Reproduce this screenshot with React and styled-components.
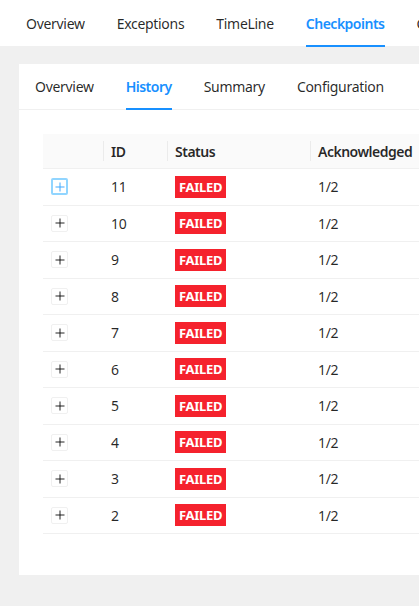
import React from "react"
import styled, { createGlobalStyle } from "styled-components"

const topTabs = ["Overview", "Exceptions", "TimeLine", "Checkpoints", "Configuration"]
const subTabs = ["Overview", "History", "Summary", "Configuration"]
const rows = [11, 10, 9, 8, 7, 6, 5, 4, 3, 2]

export default () => {
  return (
    <Page>
      <GlobalStyle />
      <TopBar>
        {topTabs.map((t) => (
          <TopTab key={t} $active={t === "Checkpoints"}>
            {t}
          </TopTab>
        ))}
      </TopBar>

      <Content>
        <Card>
          <SubBar>
            {subTabs.map((t) => (
              <SubTab key={t} $active={t === "History"}>
                {t}
              </SubTab>
            ))}
          </SubBar>

          <TableWrap>
            <HeadRow>
              <HeadCell />
              <HeadCell $divider>ID</HeadCell>
              <HeadCell $divider>Status</HeadCell>
              <HeadCell $divider>Acknowledged</HeadCell>
            </HeadRow>
            {rows.map((id, i) => (
              <Row key={id}>
                <Cell>
                  <Expand $focused={i === 0} />
                </Cell>
                <Cell>{id}</Cell>
                <Cell>
                  <Badge>FAILED</Badge>
                </Cell>
                <Cell>1/2</Cell>
              </Row>
            ))}
          </TableWrap>
        </Card>
      </Content>
    </Page>
  )
}

const GlobalStyle = createGlobalStyle`
  html, body {
    margin: 0;
    background: #f0f0f0;
    overflow: hidden;
  }
  body {
    font-family: "Segoe UI", "Noto Sans", "Open Sans", sans-serif;
    font-size: 14px;
    letter-spacing: -0.3px;
    color: rgba(0, 0, 0, 0.85);
  }
`

const Page = styled.div`
  width: 760px;
  min-height: 606px;
`

const TopBar = styled.div`
  display: flex;
  gap: 32px;
  height: 46px;
  padding-left: 26px;
  background: #fff;
`

const TopTab = styled.div`
  display: flex;
  align-items: center;
  box-sizing: border-box;
  height: 47px;
  padding-top: 2px;
  white-space: nowrap;
  color: ${(p) => (p.$active ? "#1890ff" : "rgba(0, 0, 0, 0.85)")};
  font-weight: ${(p) => (p.$active ? 600 : 400)};
  letter-spacing: ${(p) => (p.$active ? "-0.5px" : "-0.3px")};
  border-bottom: 2px solid ${(p) => (p.$active ? "#1890ff" : "transparent")};
`

const Content = styled.div`
  padding: 18px 0 0 19px;
`

const Card = styled.div`
  background: #fff;
  padding-bottom: 41px;
`

const SubBar = styled.div`
  display: flex;
  gap: 32px;
  height: 45px;
  padding-left: 16px;
  border-bottom: 1px solid #f0f0f0;
`

const SubTab = styled.div`
  display: flex;
  align-items: center;
  box-sizing: border-box;
  height: 46px;
  padding-top: 1px;
  white-space: nowrap;
  color: ${(p) => (p.$active ? "#1890ff" : "rgba(0, 0, 0, 0.85)")};
  font-weight: ${(p) => (p.$active ? 600 : 400)};
  letter-spacing: ${(p) => (p.$active ? "-0.5px" : "-0.3px")};
  border-bottom: 2px solid ${(p) => (p.$active ? "#1890ff" : "transparent")};
`

const TableWrap = styled.div`
  padding: 24px 0 0 24px;
`

const HeadRow = styled.div`
  display: grid;
  grid-template-columns: 60px 64px 143px 1fr;
  height: 34px;
  background: #fafafa;
  border-bottom: 1px solid #f0f0f0;
  font-weight: 600;
  letter-spacing: -0.5px;
`

const HeadCell = styled.div`
  position: relative;
  display: flex;
  align-items: center;
  padding: 0 8px;
  &::before {
    content: "";
    display: ${(p) => (p.$divider ? "block" : "none")};
    position: absolute;
    left: 0;
    top: 50%;
    width: 1px;
    height: 20px;
    transform: translateY(-50%);
    background: rgba(0, 0, 0, 0.06);
  }
`

const Row = styled.div`
  display: grid;
  grid-template-columns: 60px 64px 143px 1fr;
  height: 36.5px;
  box-sizing: border-box;
  border-bottom: 1px solid #f0f0f0;
`

const Cell = styled.div`
  display: flex;
  align-items: center;
  padding: 0 8px;
`

const Expand = styled.div`
  position: relative;
  box-sizing: border-box;
  width: 17px;
  height: 17px;
  border-radius: 2px;
  border: ${(p) => (p.$focused ? "2px solid #91d5ff" : "1px solid #f0f0f0")};
  color: ${(p) => (p.$focused ? "#40a9ff" : "rgba(0, 0, 0, 0.85)")};
  &::before,
  &::after {
    content: "";
    position: absolute;
    background: currentColor;
    top: 50%;
    left: 50%;
  }
  &::before {
    width: 9px;
    height: 1px;
    transform: translate(-50%, -50%);
  }
  &::after {
    width: 1px;
    height: 9px;
    transform: translate(-50%, -50%);
  }
`

const Badge = styled.span`
  display: inline-flex;
  align-items: center;
  height: 22px;
  padding: 0 4px;
  background: #f5222d;
  color: #fff;
  font-weight: 700;
  font-size: 13px;
  letter-spacing: -0.3px;
`
